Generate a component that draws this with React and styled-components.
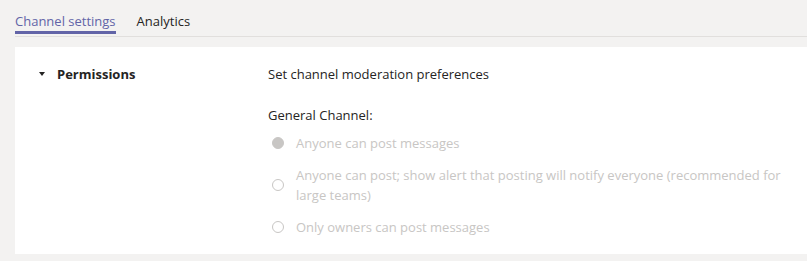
import React from "react";
import styled, { createGlobalStyle } from "styled-components";

const Global = createGlobalStyle`
	body {
		margin: 0;
		background: #f3f2f1;
		font-family: "Segoe UI", "Open Sans", "Noto Sans", sans-serif;
		color: #252423;
	}
`;

const Page = styled.div`
	padding: 0 0 7px 15px;
`;

const Tabs = styled.div`
	display: flex;
	gap: 21px;
	height: 36px;
	border-bottom: 1px solid #e1dfdd;
`;

const Tab = styled.div`
	padding-top: 12px;
	font-size: 13px;
	line-height: 19px;
	color: ${(p) => (p.active ? "#6264a7" : "#252423")};
	position: relative;
	&::after {
		content: "";
		display: ${(p) => (p.active ? "block" : "none")};
		position: absolute;
		left: 0;
		right: 0;
		top: 31px;
		height: 3px;
		background: #6264a7;
	}
`;

const Card = styled.div`
	margin-top: 10px;
	background: #fff;
	display: grid;
	grid-template-columns: 253px 1fr;
	padding: 16px 0 17px 0;
`;

const Header = styled.div`
	display: flex;
	align-items: center;
	gap: 12px;
	padding-left: 24px;
	height: 22px;
	font-size: 13px;
	font-weight: 700;
`;

const Caret = styled.span`
	width: 0;
	height: 0;
	border-left: 3.5px solid transparent;
	border-right: 3.5px solid transparent;
	border-top: 4px solid #252423;
`;

const Content = styled.div`
	display: flex;
	flex-direction: column;
	font-size: 13px;
	line-height: 19px;
`;

const Line = styled.div`
	height: 22px;
	display: flex;
	align-items: center;
	margin-bottom: ${(p) => p.mb || 0}px;
`;

const Options = styled.div`
	display: flex;
	flex-direction: column;
	gap: 12px;
	color: #c8c6c4;
	margin-top: 7px;
	line-height: 20px;
`;

const Option = styled.label`
	display: flex;
	align-items: center;
	gap: 12px;
	padding-left: 4px;
`;

const Radio = styled.span`
	flex: none;
	width: 12px;
	height: 12px;
	border-radius: 50%;
	box-sizing: border-box;
	border: 1px solid #c8c6c4;
	background: ${(p) => (p.checked ? "#c8c6c4" : "#fff")};
`;

const OptionText = styled.span`
	max-width: 500px;
`;

export default function App() {
	return (
		<>
			<Global />
			<Page>
				<Tabs>
					<Tab active>Channel settings</Tab>
					<Tab>Analytics</Tab>
				</Tabs>
				<Card>
					<Header>
						<Caret />
						Permissions
					</Header>
					<Content>
						<Line mb={19}>Set channel moderation preferences</Line>
						<Line>General Channel:</Line>
						<Options>
							<Option>
								<Radio checked />
								<OptionText>Anyone can post messages</OptionText>
							</Option>
							<Option>
								<Radio />
								<OptionText>
									Anyone can post; show alert that posting will notify everyone
									(recommended for large teams)
								</OptionText>
							</Option>
							<Option>
								<Radio />
								<OptionText>Only owners can post messages</OptionText>
							</Option>
						</Options>
					</Content>
				</Card>
			</Page>
		</>
	);
}
